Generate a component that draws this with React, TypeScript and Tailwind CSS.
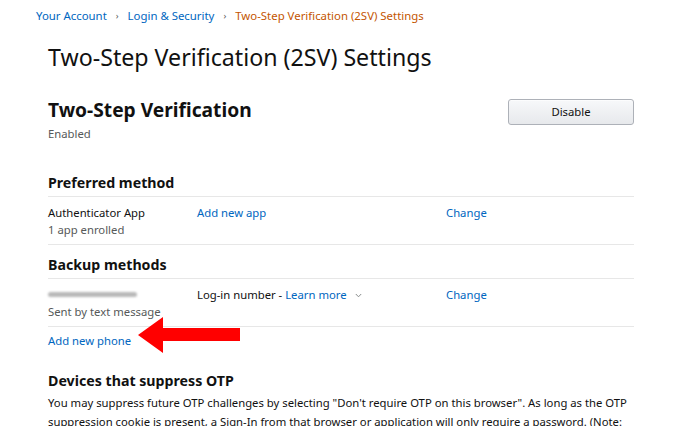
const link = "text-[#0066c0]";

function Chevron() {
  return (
    <svg width="7" height="5" viewBox="0 0 7 5" className="ml-[8px] inline-block align-middle">
      <path d="M0.8 1 L3.5 3.8 L6.2 1" fill="none" stroke="#888c8c" strokeWidth="1" />
    </svg>
  );
}

function Arrow() {
  return (
    <svg
      width="104"
      height="38"
      viewBox="0 0 104 38"
      className="absolute left-[90px] top-[-11px]"
    >
      <polygon points="0,19 25,1 25,12 102,12 102,25 25,25 25,37" fill="#ff0000" />
    </svg>
  );
}

export default function App() {
  return (
    <div className="w-[675px] h-[426px] overflow-hidden bg-white text-[#111] font-['Noto_Sans',sans-serif]">
      <nav className="pl-[36px] pt-[8px] text-[11.4px] leading-[16px] flex items-center">
        <span className={link}>Your Account</span>
        <span className="mx-[9px] text-[#555] text-[9px]">›</span>
        <span className={link}>Login &amp; Security</span>
        <span className="mx-[9px] text-[#555] text-[9px]">›</span>
        <span className="text-[#c45500]">Two-Step Verification (2SV) Settings</span>
      </nav>

      <div className="ml-[48px] w-[586px]">
        <h1 className="mt-[18px] text-[23.2px] leading-[30px] font-normal">
          Two-Step Verification (2SV) Settings
        </h1>

        <div className="mt-[25px] flex justify-between items-start">
          <div>
            <h2 className="text-[19.2px] leading-[26px] font-bold">Two-Step Verification</h2>
            <p className="mt-[3px] text-[11.3px] leading-[16px] text-[#565959]">Enabled</p>
          </div>
          <button className="mt-[2px] w-[126px] h-[26px] rounded-[3px] border border-[#adb1b8] bg-gradient-to-b from-[#f7f8fa] to-[#e7e9ec] text-[11.3px] text-[#111] shadow-[0_1px_0_rgba(255,255,255,0.6)_inset]">
            Disable
          </button>
        </div>

        <h3 className="mt-[31px] pb-[3px] border-b border-[#e7e7e7] text-[14.2px] leading-[20px] font-bold">
          Preferred method
        </h3>
        <div className="grid grid-cols-[149px_249px_1fr] pt-[7px] pb-[6px] border-b border-[#e7e7e7] text-[11.3px] leading-[17px]">
          <div>
            <div>Authenticator App</div>
            <div className="text-[#565959]">1 app enrolled</div>
          </div>
          <div className={link}>Add new app</div>
          <div className={link}>Change</div>
        </div>

        <h3 className="mt-[10px] pb-[3px] border-b border-[#e7e7e7] text-[14.2px] leading-[20px] font-bold">
          Backup methods
        </h3>
        <div className="grid grid-cols-[149px_249px_1fr] pt-[7px] pb-[6px] border-b border-[#e7e7e7] text-[11.3px] leading-[17px]">
          <div>
            <div className="h-[17px] flex items-center">
              <div className="w-[89px] h-[5px] rounded-full bg-[#b9b9b9] blur-[1.2px]" />
            </div>
            <div className="text-[#565959]">Sent by text message</div>
          </div>
          <div>
            Log-in number - <span className={link}>Learn more</span>
            <Chevron />
          </div>
          <div className={link}>Change</div>
        </div>

        <div className="relative pt-[6px] text-[11.3px] leading-[16px]">
          <span className={link}>Add new phone</span>
          <Arrow />
        </div>

        <h3 className="mt-[22px] text-[14.2px] leading-[20px] font-bold">Devices that suppress OTP</h3>
        <p className="mt-[2px] text-[11.3px] leading-[19px]">
          You may suppress future OTP challenges by selecting "Don't require OTP on this browser". As long as the OTP
          suppression cookie is present, a Sign-In from that browser or application will only require a password. (Note:
        </p>
      </div>
    </div>
  );
}
